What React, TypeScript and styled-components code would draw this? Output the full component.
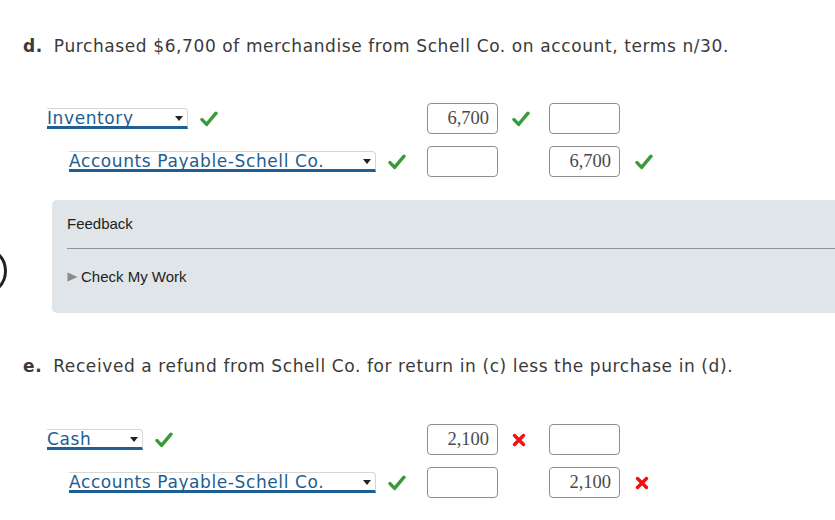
import React from "react";
import styled, { createGlobalStyle } from "styled-components";

const Global = createGlobalStyle`
  html, body { margin: 0; padding: 0; background: #fff; }
  body { overflow: hidden; width: 835px; height: 520px; }
`;

const Page = styled.div`
  position: relative;
  width: 835px;
  height: 520px;
  padding-top: 36px;
  box-sizing: border-box;
  font-family: "DejaVu Sans", Verdana, sans-serif;
  color: #333;
`;

const Arc = styled.div`
  position: absolute;
  left: -43px;
  top: 246px;
  width: 50px;
  height: 50px;
  border: 3px solid #222;
  border-radius: 50%;
  box-sizing: border-box;
`;

const Heading = styled.div<{ $top?: number }>`
  margin-top: ${(p) => p.$top ?? 0}px;
  padding-left: 23px;
  font-size: 17px;
  letter-spacing: 0.6px;
  line-height: 20px;
  color: #3a3a3a;
  white-space: nowrap;
`;

const Letter = styled.span`
  font-weight: bold;
  margin-right: 11px;
`;

const Entries = styled.div<{ $top: number }>`
  margin-top: ${(p) => p.$top}px;
  display: flex;
  flex-direction: column;
  gap: 12px;
`;

const Row = styled.div`
  display: grid;
  grid-template-columns: 380px 71px 51px 72px 1fr;
  align-items: center;
  height: 31px;
  padding-left: 47px;
`;

const AccountCell = styled.div<{ $indent?: boolean }>`
  display: flex;
  align-items: center;
  gap: 12px;
  padding-left: ${(p) => (p.$indent ? 22 : 0)}px;
`;

const Select = styled.div<{ $w: number }>`
  width: ${(p) => p.$w}px;
  height: 21px;
  box-sizing: border-box;
  display: flex;
  align-items: center;
  justify-content: space-between;
  padding-right: 4px;
  background: #fff;
  border: 1px solid #d6d6d6;
  border-left: none;
  border-bottom: 3px solid #1f5f93;
  border-radius: 0 4px 0 0;
  color: #1d5d92;
  font-size: 17px;
  letter-spacing: 0.6px;
  line-height: 18px;
  white-space: nowrap;
`;

const Arrow = styled.span`
  width: 0;
  height: 0;
  border-left: 4px solid transparent;
  border-right: 4px solid transparent;
  border-top: 5px solid #222;
  margin-top: 2px;
`;

const Amount = styled.div`
  width: 71px;
  height: 31px;
  box-sizing: border-box;
  border: 1px solid #8e8e8e;
  border-radius: 4px;
  background: #fff;
  font-family: "Liberation Serif", "Times New Roman", serif;
  font-size: 18.5px;
  line-height: 29px;
  text-align: right;
  padding-right: 8px;
  color: #4a4a4a;
`;

const MarkCell = styled.div`
  display: flex;
  align-items: center;
  padding-left: 14px;
`;

const Panel = styled.div`
  margin: 23px -20px 0 52px;
  height: 113px;
  background: #dfe5e8;
  border-radius: 5px;
  padding-left: 15px;
  box-sizing: border-box;
  font-family: "Liberation Sans", Arial, sans-serif;
  font-size: 15px;
  color: #222;
`;

const PanelTitle = styled.div`
  height: 48px;
  line-height: 48px;
  border-bottom: 1px solid #8b9498;
`;

const PanelToggle = styled.div`
  display: flex;
  align-items: center;
  gap: 3px;
  padding-top: 20px;
  line-height: 16px;
`;

const CheckMark = () => (
  <svg width="18" height="16" viewBox="0 0 18 16">
    <path d="M2 8.6 L6.6 13.4 L16 2.2" fill="none" stroke="#3a9a3a" strokeWidth="3.4" strokeLinecap="round" strokeLinejoin="round" />
  </svg>
);

const Cross = () => (
  <svg width="14" height="14" viewBox="0 0 14 14">
    <path d="M2.5 2.5 L11.5 11.5 M11.5 2.5 L2.5 11.5" fill="none" stroke="#f31010" strokeWidth="3.4" strokeLinecap="round" />
  </svg>
);

const Triangle = () => (
  <svg width="11" height="10" viewBox="0 0 11 10">
    <path d="M0.5 0.5 L10.5 5 L0.5 9.5 Z" fill="#8a8a8a" />
  </svg>
);

type Mark = "ok" | "bad" | null;

interface EntryProps {
  account: string;
  width: number;
  indent?: boolean;
  debit?: string;
  credit?: string;
  debitMark?: Mark;
  creditMark?: Mark;
}

const MarkIcon = ({ m }: { m: Mark }) => (m === "ok" ? <CheckMark /> : m === "bad" ? <Cross /> : null);

const Entry = ({ account, width, indent, debit, credit, debitMark = null, creditMark = null }: EntryProps) => (
  <Row>
    <AccountCell $indent={indent}>
      <Select $w={width}>
        <span>{account}</span>
        <Arrow />
      </Select>
      <CheckMark />
    </AccountCell>
    <Amount>{debit}</Amount>
    <MarkCell>
      <MarkIcon m={debitMark} />
    </MarkCell>
    <Amount>{credit}</Amount>
    <MarkCell>
      <MarkIcon m={creditMark} />
    </MarkCell>
  </Row>
);

export default function App() {
  return (
    <>
      <Global />
      <Page>
        <Arc />
        <Heading>
          <Letter>d.</Letter>Purchased $6,700 of merchandise from Schell Co. on account, terms n/30.
        </Heading>
        <Entries $top={47}>
          <Entry account="Inventory" width={141} debit="6,700" debitMark="ok" />
          <Entry account="Accounts Payable-Schell Co." width={307} indent credit="6,700" creditMark="ok" />
        </Entries>
        <Panel>
          <PanelTitle>Feedback</PanelTitle>
          <PanelToggle>
            <Triangle />
            Check My Work
          </PanelToggle>
        </Panel>
        <Heading $top={43}>
          <Letter>e.</Letter>Received a refund from Schell Co. for return in (c) less the purchase in (d).
        </Heading>
        <Entries $top={48}>
          <Entry account="Cash" width={96} debit="2,100" debitMark="bad" />
          <Entry account="Accounts Payable-Schell Co." width={307} indent credit="2,100" creditMark="bad" />
        </Entries>
      </Page>
    </>
  );
}
